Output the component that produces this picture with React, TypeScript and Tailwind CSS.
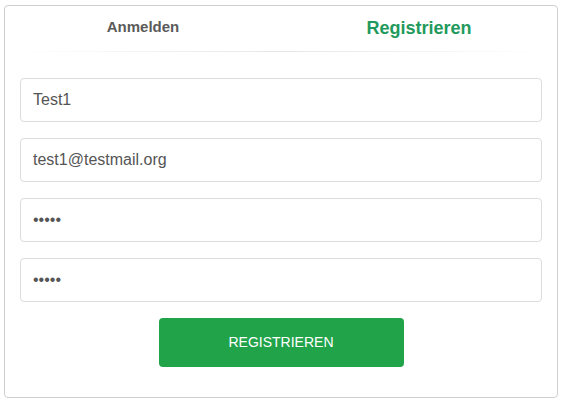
import { useState } from 'react';

export default function App() {
    const [name, setName] = useState('Test1');
    const [email, setEmail] = useState('test1@testmail.org');
    const [password, setPassword] = useState('12345');
    const [confirm, setConfirm] = useState('12345');

    const inputClass =
        'w-full h-[44px] rounded-[4px] border border-[#dcdcdc] bg-white px-[12px] text-[16px] text-[#555] outline-none';

    return (
        <div className="min-h-screen bg-white pt-[5px] pl-[4px]" style={{ fontFamily: '"Liberation Sans", Arial, sans-serif' }}>
            <div className="w-[554px] h-[393px] rounded-[4px] border border-[#cfcfcf] bg-white">
                <div className="flex h-[45px] items-center">
                    <button className="flex-1 pb-[3px] text-center text-[15px] font-bold text-[#5a5a5a]">
                        Anmelden
                    </button>
                    <button className="flex-1 pb-[1px] text-center text-[18px] font-bold text-[#1f9a5c]">
                        Registrieren
                    </button>
                </div>
                <div className="mx-[16px] h-[1px] bg-gradient-to-r from-transparent via-[#e6e6e6] to-transparent" />
                <form className="flex flex-col gap-[16px] px-[15px] pt-[26px]" onSubmit={(e) => e.preventDefault()}>
                    <input className={inputClass} value={name} onChange={(e) => setName(e.target.value)} />
                    <input className={inputClass} value={email} onChange={(e) => setEmail(e.target.value)} />
                    <input type="password" className={inputClass} value={password} onChange={(e) => setPassword(e.target.value)} />
                    <input type="password" className={inputClass} value={confirm} onChange={(e) => setConfirm(e.target.value)} />
                    <div className="flex justify-center">
                        <button
                            type="submit"
                            className="h-[49px] w-[245px] rounded-[4px] bg-[#21a34a] text-[14px] text-white uppercase"
                        >
                            Registrieren
                        </button>
                    </div>
                </form>
            </div>
        </div>
    );
}
